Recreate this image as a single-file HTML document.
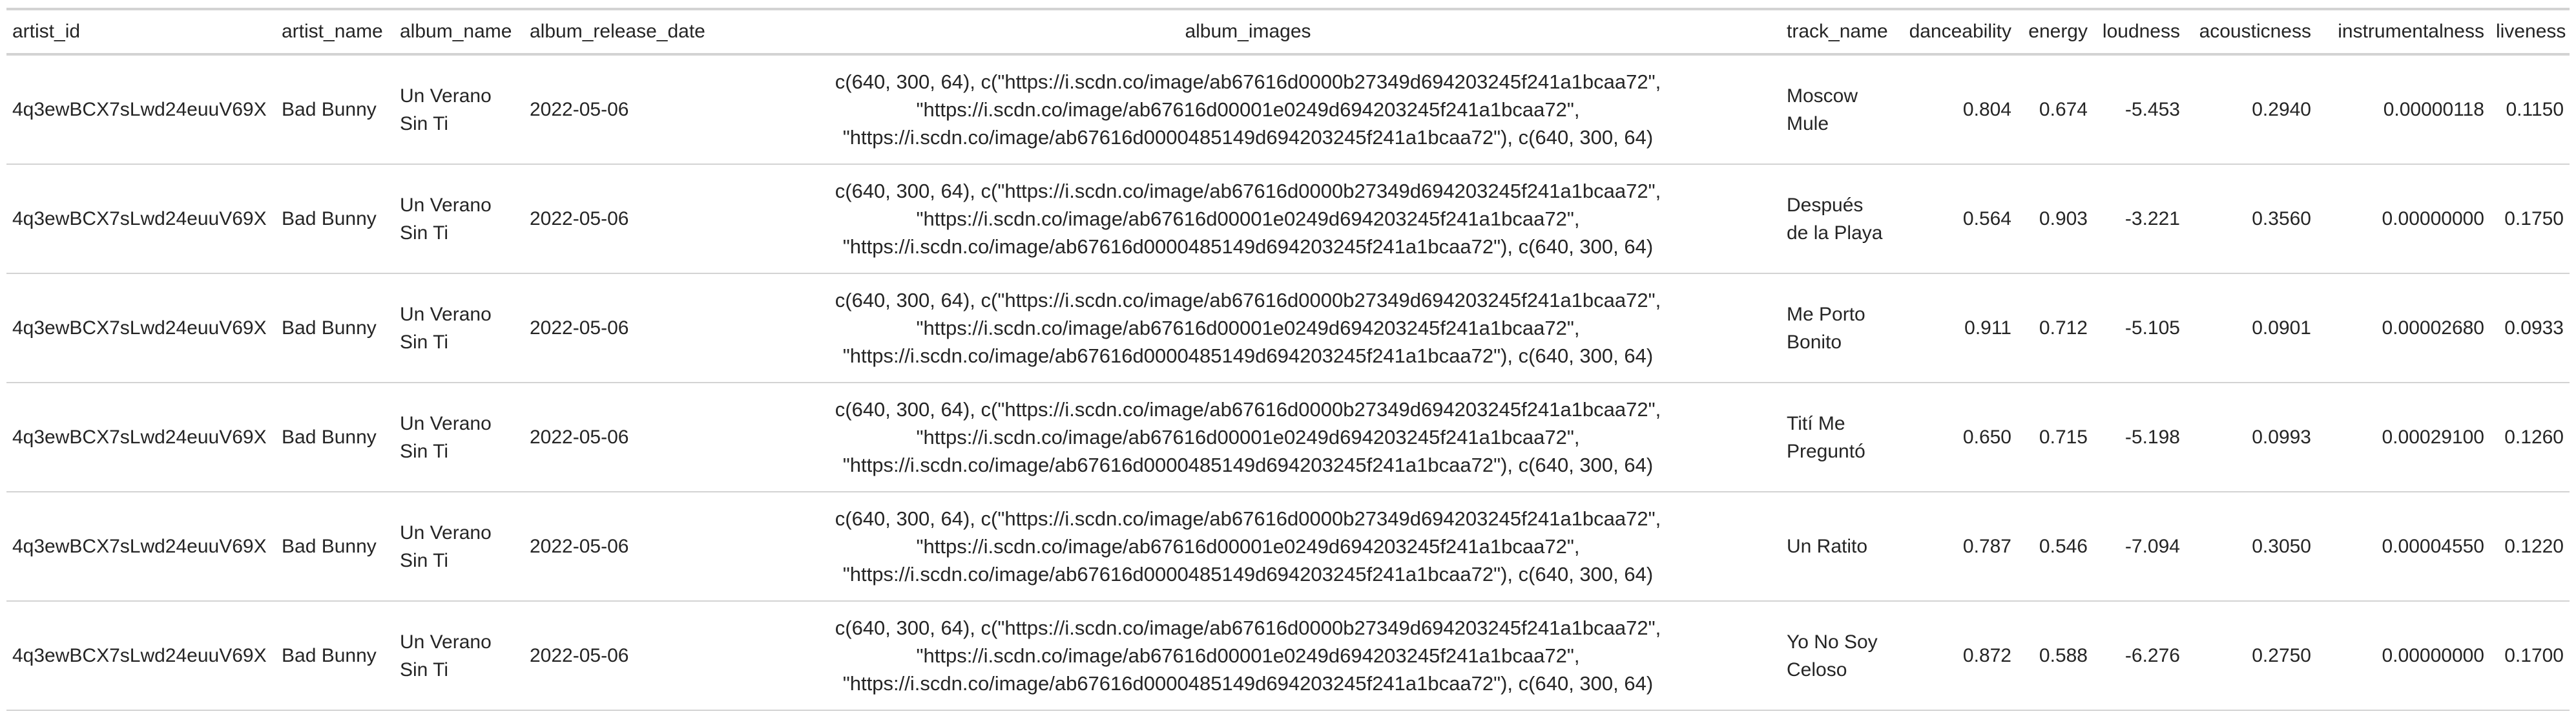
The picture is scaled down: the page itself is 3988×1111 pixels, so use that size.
<!DOCTYPE html>
<html><head><meta charset="utf-8">
<style>
html,body{margin:0;padding:0;background:#fff;width:3988px;height:1111px;overflow:hidden}
table{position:absolute;left:10px;top:12px;width:3968px;border-collapse:collapse;table-layout:fixed;font-family:"Liberation Sans",sans-serif;font-size:30px;color:#252525;border-top:4px solid #d3d3d3}
th{font-weight:normal;height:66px;border-bottom:4px solid #d3d3d3;padding:0 9px;text-align:left;white-space:nowrap;vertical-align:middle}
td{height:167px;border-bottom:2px solid #d3d3d3;padding:0 9px;line-height:43px;white-space:nowrap;vertical-align:middle}
.r{text-align:right}.c{text-align:center}
td.c{font-size:31px}
</style></head><body>
<table>
<colgroup>
<col style="width:417px"><col style="width:183px"><col style="width:201px"><col style="width:296px"><col style="width:1650px"><col style="width:180px"><col style="width:186px"><col style="width:118px"><col style="width:143px"><col style="width:203px"><col style="width:268px"><col style="width:123px">
</colgroup>
<tr><th>artist_id</th><th>artist_name</th><th>album_name</th><th>album_release_date</th><th class="c">album_images</th><th>track_name</th><th class="r">danceability</th><th class="r">energy</th><th class="r">loudness</th><th class="r">acousticness</th><th class="r">instrumentalness</th><th class="r">liveness</th></tr>
<tr><td>4q3ewBCX7sLwd24euuV69X</td><td>Bad Bunny</td><td>Un Verano<br>Sin Ti</td><td>2022-05-06</td><td class="c">c(640, 300, 64), c("https://i.scdn.co/image/ab67616d0000b27349d694203245f241a1bcaa72",<br>"https://i.scdn.co/image/ab67616d00001e0249d694203245f241a1bcaa72",<br>"https://i.scdn.co/image/ab67616d0000485149d694203245f241a1bcaa72"), c(640, 300, 64)</td><td>Moscow<br>Mule</td><td class="r">0.804</td><td class="r">0.674</td><td class="r">-5.453</td><td class="r">0.2940</td><td class="r">0.00000118</td><td class="r">0.1150</td></tr>
<tr><td>4q3ewBCX7sLwd24euuV69X</td><td>Bad Bunny</td><td>Un Verano<br>Sin Ti</td><td>2022-05-06</td><td class="c">c(640, 300, 64), c("https://i.scdn.co/image/ab67616d0000b27349d694203245f241a1bcaa72",<br>"https://i.scdn.co/image/ab67616d00001e0249d694203245f241a1bcaa72",<br>"https://i.scdn.co/image/ab67616d0000485149d694203245f241a1bcaa72"), c(640, 300, 64)</td><td>Después<br>de la Playa</td><td class="r">0.564</td><td class="r">0.903</td><td class="r">-3.221</td><td class="r">0.3560</td><td class="r">0.00000000</td><td class="r">0.1750</td></tr>
<tr><td>4q3ewBCX7sLwd24euuV69X</td><td>Bad Bunny</td><td>Un Verano<br>Sin Ti</td><td>2022-05-06</td><td class="c">c(640, 300, 64), c("https://i.scdn.co/image/ab67616d0000b27349d694203245f241a1bcaa72",<br>"https://i.scdn.co/image/ab67616d00001e0249d694203245f241a1bcaa72",<br>"https://i.scdn.co/image/ab67616d0000485149d694203245f241a1bcaa72"), c(640, 300, 64)</td><td>Me Porto<br>Bonito</td><td class="r">0.911</td><td class="r">0.712</td><td class="r">-5.105</td><td class="r">0.0901</td><td class="r">0.00002680</td><td class="r">0.0933</td></tr>
<tr><td>4q3ewBCX7sLwd24euuV69X</td><td>Bad Bunny</td><td>Un Verano<br>Sin Ti</td><td>2022-05-06</td><td class="c">c(640, 300, 64), c("https://i.scdn.co/image/ab67616d0000b27349d694203245f241a1bcaa72",<br>"https://i.scdn.co/image/ab67616d00001e0249d694203245f241a1bcaa72",<br>"https://i.scdn.co/image/ab67616d0000485149d694203245f241a1bcaa72"), c(640, 300, 64)</td><td>Tití Me<br>Preguntó</td><td class="r">0.650</td><td class="r">0.715</td><td class="r">-5.198</td><td class="r">0.0993</td><td class="r">0.00029100</td><td class="r">0.1260</td></tr>
<tr><td>4q3ewBCX7sLwd24euuV69X</td><td>Bad Bunny</td><td>Un Verano<br>Sin Ti</td><td>2022-05-06</td><td class="c">c(640, 300, 64), c("https://i.scdn.co/image/ab67616d0000b27349d694203245f241a1bcaa72",<br>"https://i.scdn.co/image/ab67616d00001e0249d694203245f241a1bcaa72",<br>"https://i.scdn.co/image/ab67616d0000485149d694203245f241a1bcaa72"), c(640, 300, 64)</td><td>Un Ratito</td><td class="r">0.787</td><td class="r">0.546</td><td class="r">-7.094</td><td class="r">0.3050</td><td class="r">0.00004550</td><td class="r">0.1220</td></tr>
<tr><td>4q3ewBCX7sLwd24euuV69X</td><td>Bad Bunny</td><td>Un Verano<br>Sin Ti</td><td>2022-05-06</td><td class="c">c(640, 300, 64), c("https://i.scdn.co/image/ab67616d0000b27349d694203245f241a1bcaa72",<br>"https://i.scdn.co/image/ab67616d00001e0249d694203245f241a1bcaa72",<br>"https://i.scdn.co/image/ab67616d0000485149d694203245f241a1bcaa72"), c(640, 300, 64)</td><td>Yo No Soy<br>Celoso</td><td class="r">0.872</td><td class="r">0.588</td><td class="r">-6.276</td><td class="r">0.2750</td><td class="r">0.00000000</td><td class="r">0.1700</td></tr>
</table>
</body></html>
